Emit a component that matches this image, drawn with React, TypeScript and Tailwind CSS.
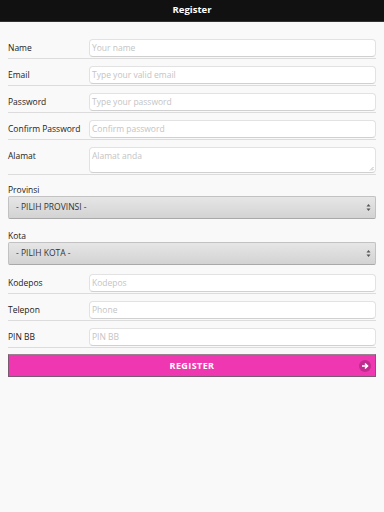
import React from "react";

type Field = {
  label: string;
  placeholder: string;
  multiline?: boolean;
};

const topFields: Field[] = [
  { label: "Name", placeholder: "Your name" },
  { label: "Email", placeholder: "Type your valid email" },
  { label: "Password", placeholder: "Type your password" },
  { label: "Confirm Password", placeholder: "Confirm password" },
  { label: "Alamat", placeholder: "Alamat anda", multiline: true },
];

const bottomFields: Field[] = [
  { label: "Kodepos", placeholder: "Kodepos" },
  { label: "Telepon", placeholder: "Phone" },
  { label: "PIN BB", placeholder: "PIN BB" },
];

const FieldRow = ({ label, placeholder, multiline }: Field) => (
  <div
    className={`flex ${multiline ? "items-start" : "items-center"} pt-[7px] pb-[1px] border-b border-[#dcdcdc]`}
  >
    <label
      className={`w-[81px] shrink-0 text-[8.5px] text-[#222] ${multiline ? "pt-[3px]" : ""}`}
    >
      {label}
    </label>
    {multiline ? (
      <div className="relative flex-1 h-[26px] rounded-[4px] border border-[#e2e2e2] border-b-[#d0d0d0] bg-white px-[2px] pt-[2px] text-[8.5px] text-[#c4c4c4]">
        {placeholder}
        <svg
          width="5"
          height="5"
          viewBox="0 0 5 5"
          className="absolute right-[1px] bottom-[1px]"
        >
          <path d="M4.5 1 L1 4.5 M4.5 3 L3 4.5" stroke="#aaa" strokeWidth="0.8" />
        </svg>
      </div>
    ) : (
      <div className="flex-1 h-[18px] rounded-[4px] border border-[#e2e2e2] border-b-[#d0d0d0] bg-white px-[2px] flex items-center text-[8.5px] text-[#c4c4c4]">
        {placeholder}
      </div>
    )}
  </div>
);

const SelectBox = ({ label, value }: { label: string; value: string }) => (
  <div>
    <div className="text-[8.5px] leading-[11px] text-[#222]">{label}</div>
    <div className="mt-[1px] h-[23px] rounded-[2px] border border-[#c2c2c2] border-b-[#a9a9a9] bg-gradient-to-b from-[#e6e6e6] to-[#d3d3d3] flex items-center justify-between pl-[7px] pr-[4px]">
      <span className="text-[8.5px] text-[#333]">{value}</span>
      <svg width="5" height="9" viewBox="0 0 5 9">
        <path d="M2.5 1 L4.5 3.5 L0.5 3.5 Z" fill="#555" />
        <path d="M2.5 8 L4.5 5.5 L0.5 5.5 Z" fill="#555" />
      </svg>
    </div>
  </div>
);

export default function App() {
  return (
    <div
      className="w-[384px] h-[512px] bg-[#f9f9f9] overflow-hidden"
      style={{ fontFamily: '"Open Sans", "DejaVu Sans", sans-serif' }}
    >
      {/* Header */}
      <div className="h-[22px] bg-[#111] border-b border-[#333] flex items-center justify-center">
        <span className="text-white font-bold text-[9.5px]">Register</span>
      </div>

      <div className="px-[8px] pt-[10px]">
        {topFields.map((f) => (
          <FieldRow key={f.label} {...f} />
        ))}

        <div className="pt-[9px]">
          <SelectBox label="Provinsi" value="- PILIH PROVINSI -" />
        </div>
        <div className="pt-[11px] pb-[2px]">
          <SelectBox label="Kota" value="- PILIH KOTA -" />
        </div>

        {bottomFields.map((f) => (
          <FieldRow key={f.label} {...f} />
        ))}

        {/* Register button */}
        <button className="mt-[6px] w-full h-[23px] bg-[#ee37b0] border border-[#7a5a70] border-t-[#9a8090] flex items-center justify-center relative">
          <span className="text-white font-bold text-[9px] tracking-[0.4px]">
            REGISTER
          </span>
          <span className="absolute right-[4px] top-1/2 -translate-y-1/2 w-[12px] h-[12px] rounded-full bg-[#c02c8e] flex items-center justify-center">
            <svg width="8" height="8" viewBox="0 0 8 8">
              <path d="M1 4 H6 M4 1.5 L6.5 4 L4 6.5" stroke="#fff" strokeWidth="1.6" fill="none" />
            </svg>
          </span>
        </button>
      </div>
    </div>
  );
}
